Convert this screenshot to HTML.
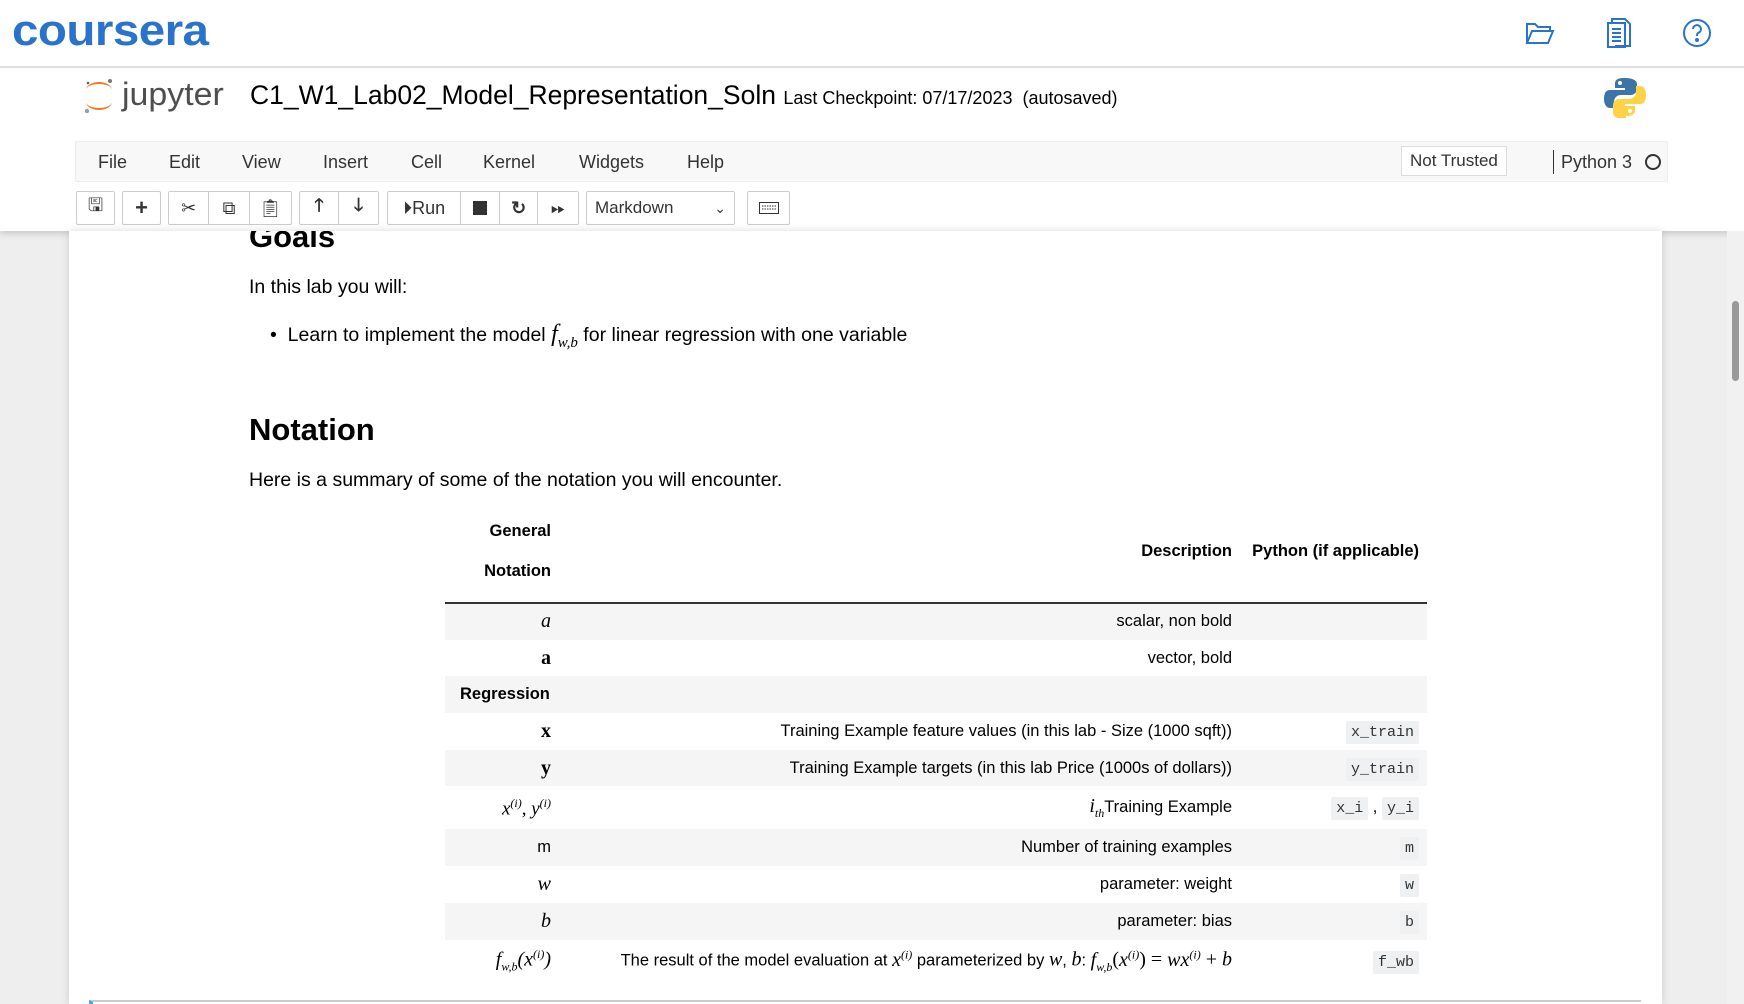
<!DOCTYPE html>
<html><head><meta charset="utf-8"><style>
*{box-sizing:border-box;margin:0;padding:0}
body{width:1744px;height:1004px;overflow:hidden;background:#eee;font-family:"Liberation Sans",Arial,sans-serif;color:#000;position:relative}
.abs{position:absolute}
#top{left:0;top:0;width:1744px;height:68px;background:#fff;border-bottom:2px solid #e3e3e3}
#jh{left:0;top:68px;width:1744px;height:163px;background:#fff;box-shadow:0 3px 6px rgba(0,0,0,.15)}
.menu{left:75px;top:141px;width:1593px;height:41px;background:#f8f8f8;border:1px solid #eee;border-radius:2px}
.mi{position:absolute;top:10px;font-size:18px;color:#333}
.btn{position:absolute;top:191px;height:34px;border:1px solid #ccc;border-radius:2px;background:#fff;display:flex;align-items:center;justify-content:center;color:#333;font-size:18px}
.grp{position:absolute;top:191px;height:34px;border:1px solid #ccc;border-radius:2px;background:#fff;display:flex}
.grp div{border-right:1px solid #ccc;display:flex;align-items:center;justify-content:center;height:100%;color:#333;font-size:18px}
.grp div:last-child{border-right:none}
#nb{left:69px;top:231px;width:1593px;height:773px;background:#fff;box-shadow:0 0 8px rgba(0,0,0,.15)}
.md{position:absolute;left:249px;font-size:19.5px;color:#000}
table{position:absolute;left:445px;top:500px;width:982px;border-collapse:collapse;font-size:16.5px;color:#000}
th{font-weight:bold;text-align:right;padding:0 8px;vertical-align:middle}
td{text-align:right;padding:0 8px;height:36.7px;vertical-align:middle}
td:first-child,th:first-child{padding-right:0}
tr.s td{background:#f5f5f5}
.m{font-family:"Liberation Serif",serif;font-style:italic;font-size:20px}
.b{font-family:"Liberation Serif",serif;font-weight:bold;font-size:20px}
code{font-family:"Liberation Mono",monospace;font-size:15px;background:#eff0f1;padding:3px 5px;border-radius:2px;color:#333}
</style></head><body>
<div id="top" class="abs">
 <div class="abs" style="left:12px;top:6px;font-size:44px;font-weight:bold;color:#2a73cc;letter-spacing:-0.5px;transform:scaleX(1.08);transform-origin:left">coursera</div>
 <svg class="abs" style="left:1525px;top:20px" width="30" height="26" viewBox="0 0 30 26" fill="none" stroke="#2a73cc" stroke-width="2"><path d="M2 23V4h8l3 3h12v4"/><path d="M2 23l5-12h21l-5 12z"/></svg>
 <svg class="abs" style="left:1607px;top:18px" width="24" height="30" viewBox="0 0 24 30" fill="none" stroke="#2a73cc" stroke-width="2"><path d="M5 5V1h13l5 5v22H8"/><rect x="1" y="5" width="17" height="24"/><path d="M5 11h9M5 15h9M5 19h9M5 23h9"/></svg>
 <svg class="abs" style="left:1682px;top:18px" width="30" height="30" viewBox="0 0 30 30" fill="none" stroke="#2a73cc" stroke-width="2"><circle cx="15" cy="15" r="13"/><path d="M11 11a4 4 0 1 1 5 4c-1 .5-1 1.5-1 3"/><circle cx="15" cy="22" r="1" fill="#2a73cc"/></svg>
</div>
<div id="jh" class="abs">
 <svg class="abs" style="left:82px;top:8px" width="34" height="40" viewBox="0 0 34 40"><path d="M4 14a13 8 0 0 1 26 0a13 6 0 0 0-26 0z" fill="#f37726"/><path d="M4 26a13 8 0 0 0 26 0a13 6 0 0 1-26 0z" fill="#f37726"/><circle cx="28" cy="5" r="2" fill="#767677"/><circle cx="5" cy="35" r="2.2" fill="#9e9e9e"/><circle cx="6" cy="7" r="1.3" fill="#616262"/></svg>
 <div class="abs" style="left:122px;top:8px;font-size:32px;color:#4e4e4e;transform:scaleX(1.06);transform-origin:left">jupyter</div>
 <div class="abs" style="left:250px;top:12px;font-size:26.5px;color:#000">C1_W1_Lab02_Model_Representation_Soln <span style="font-size:18px">Last Checkpoint: 07/17/2023&nbsp;&nbsp;(autosaved)</span></div>
 <svg class="abs" style="left:1604px;top:8px" width="42" height="42" viewBox="0 0 42 42"><path d="M20 2c-8 0-9 3-9 6v4h10v2H6c-4 0-6 3-6 9s3 9 6 9h4v-6c0-4 3-7 7-7h10c3 0 6-3 6-6V8c0-3-3-6-13-6z" fill="#3d74a8"/><path d="M22 40c8 0 9-3 9-6v-4H21v-2h15c4 0 6-3 6-9s-3-9-6-9h-4v6c0 4-3 7-7 7H15c-3 0-6 3-6 6v8c0 3 3 6 13 6z" fill="#fdd345"/><circle cx="16" cy="7" r="2" fill="#fff"/><circle cx="26" cy="35" r="2" fill="#fff"/></svg>
</div>
<div class="abs menu">
 <span class="mi" style="left:22px">File</span><span class="mi" style="left:93px">Edit</span><span class="mi" style="left:166px">View</span><span class="mi" style="left:247px">Insert</span><span class="mi" style="left:335px">Cell</span><span class="mi" style="left:407px">Kernel</span><span class="mi" style="left:503px">Widgets</span><span class="mi" style="left:611px">Help</span>
 <div class="abs" style="left:1325px;top:4px;height:30px;padding:0 8px;border:1px solid #ddd;background:#fff;font-size:17px;line-height:28px;color:#333">Not Trusted</div>
 <div class="abs" style="left:1477px;top:8px;width:1px;height:24px;background:#333"></div>
 <span class="mi" style="left:1485px">Python 3</span>
 <div class="abs" style="left:1569px;top:12px;width:16px;height:16px;border:2px solid #333;border-radius:50%"></div>
</div>
<div class="btn" style="left:76px;width:39px">🖫</div>
<div class="btn" style="left:122px;width:39px;font-weight:bold;font-size:22px">+</div>
<div class="grp" style="left:168px;width:124px"><div style="width:41px">✂</div><div style="width:41px">⧉</div><div style="width:42px">📋︎</div></div>
<div class="grp" style="left:299px;width:80px"><div style="width:40px;font-weight:bold">🡑</div><div style="width:40px;font-weight:bold">🡓</div></div>
<div class="grp" style="left:387px;width:192px"><div style="width:74px">⏵︎Run</div><div style="width:39px"><span style="width:14px;height:14px;background:#333;display:block"></span></div><div style="width:39px;font-weight:bold">↻</div><div style="width:40px">⏩︎</div></div>
<div class="btn" style="left:586px;width:149px;justify-content:space-between;padding:0 8px;font-size:17px">Markdown <span style="font-size:14px">⌄</span></div>
<div class="btn" style="left:747px;width:43px"><svg width="20" height="12"><rect x="0.5" y="0.5" width="19" height="11" fill="none" stroke="#333"/><path d="M3 4h14M3 7h14" stroke="#333" stroke-dasharray="1.5 1"/></svg></div>
<div id="nb" class="abs"></div>
<div class="abs" style="left:1727px;top:231px;width:17px;height:773px;background:#f1f1f1"><div class="abs" style="left:5px;top:70px;width:7px;height:80px;background:#999;border-radius:4px"></div></div>
<div style="position:absolute;left:0;top:231px;width:1727px;height:773px;overflow:hidden">
 <div class="md" style="top:-12px;font-size:31px;font-weight:bold">Goals</div>
 <div class="md" style="top:45px">In this lab you will:</div>
 <div class="md" style="top:90px;left:270px">•&nbsp;&nbsp;Learn to implement the model <span class="m" style="font-size:24px">f<sub style="font-size:15px">w,b</sub></span> for linear regression with one variable</div>
 <div class="md" style="top:181px;font-size:31px;font-weight:bold">Notation</div>
 <div class="md" style="top:238px">Here is a summary of some of the notation you will encounter.</div>
 <div class="abs" style="left:89px;top:769px;width:1552px;height:4px;border-top:2px solid #ccc;border-left:4px solid #42a5f5"></div>
</div>
<table>
 <tr style="height:103px;border-bottom:2px solid #333"><th style="width:106px;line-height:40px">General<br>Notation</th><th>Description</th><th style="width:187px">Python (if applicable)</th></tr>
 <tr class="s"><td class="m">a</td><td>scalar, non bold</td><td></td></tr>
 <tr><td class="b">a</td><td>vector, bold</td><td></td></tr>
 <tr class="s"><td style="font-weight:bold;text-align:left;padding-left:15px">Regression</td><td></td><td></td></tr>
 <tr><td class="b">x</td><td>Training Example feature values (in this lab - Size (1000 sqft))</td><td><code>x_train</code></td></tr>
 <tr class="s"><td class="b">y</td><td>Training Example targets (in this lab Price (1000s of dollars))</td><td><code>y_train</code></td></tr>
 <tr style="height:43px"><td class="m" style="font-size:19px">x<sup style="font-size:12px">(i)</sup>, y<sup style="font-size:12px">(i)</sup></td><td><span class="m">i<sub style="font-size:12px">th</sub></span>Training Example</td><td><code>x_i</code> , <code>y_i</code></td></tr>
 <tr class="s"><td>m</td><td>Number of training examples</td><td><code>m</code></td></tr>
 <tr><td class="m">w</td><td>parameter: weight</td><td><code>w</code></td></tr>
 <tr class="s"><td class="m">b</td><td>parameter: bias</td><td><code>b</code></td></tr>
 <tr style="height:43px"><td class="m" style="white-space:nowrap;font-size:20px">f<sub style="font-size:12px">w,b</sub>(x<sup style="font-size:12px">(i)</sup>)</td><td style="white-space:nowrap">The result of the model evaluation at <span class="m">x<sup style="font-size:12px">(i)</sup></span> parameterized by <span class="m">w</span>, <span class="m">b</span>: <span class="m">f<sub style="font-size:12px">w,b</sub></span><span class="m" style="font-style:normal">(</span><span class="m">x<sup style="font-size:12px">(i)</sup></span><span class="m" style="font-style:normal">) = </span><span class="m">wx<sup style="font-size:12px">(i)</sup></span><span class="m" style="font-style:normal"> + </span><span class="m">b</span></td><td><code>f_wb</code></td></tr>
</table>
</body></html>
